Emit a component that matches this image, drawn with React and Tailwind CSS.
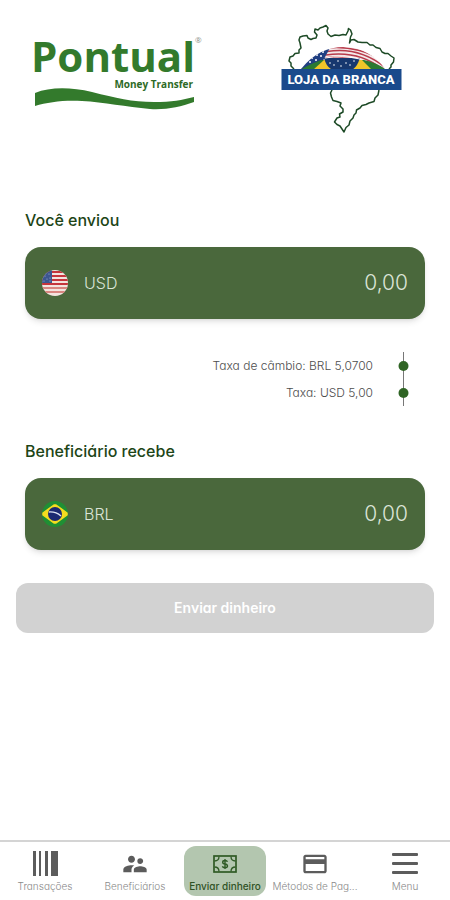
import { useState } from 'react';

import clsx from 'clsx';
import { MdCreditCard, MdSupervisorAccount } from 'react-icons/md';

function PontualLogo() {
  return (
    <svg width="174" height="90" viewBox="10 4 174 90" role="img" aria-label="Pontual Money Transfer">
      <text x="11" y="52" fontSize="42" className="font-['Open_Sans',sans-serif] font-bold" fill="#337a2c">
        Pontual
      </text>
      <text x="175" y="23" fontSize="8" className="font-['Open_Sans',sans-serif]" fill="#8a8f8a">
        ®
      </text>
      <text x="173" y="68" fontSize="10" textAnchor="end" className="font-['Open_Sans',sans-serif] font-bold" fill="#2d6a26">
        Money Transfer
      </text>
      <path
        d="M15 73 C30 67 50 67 72 72 C96 78 112 82 134 82 C152 82 162 80 174 77 V82 C160 87 146 90 130 89 C106 87 84 82 62 81 C44 80 28 82 15 86 Z"
        fill="#337a2c"
      />
    </svg>
  );
}

function LojaLogo() {
  return (
    <svg width="122" height="110" viewBox="10 9 122 110" role="img" aria-label="Loja da Branca">
      <defs>
        <clipPath id="dome">
          <path d="M31 54 C44 38 58 32 74 32 C91 32 106 41 115 54 Z" />
        </clipPath>
      </defs>
      <g fill="none" stroke="#1d4a26" strokeWidth="1.5" strokeLinejoin="round">
        <path d="M24 54 L21 51 L21 48 L19 46 L20 42 L23 41 L25 38.500 L29 38 L29 35 L31 33 L30 28 L29 25 L30 22 L33 21 L37 20.500 L38 23 L41 24.500 L43 23.500 L46 23 L47 20 L44.500 17 L45 14 L48 15 L50 13 L53 12 L56 10.500 L58 13 L57 16 L58 19 L61 21.500 L65 20 L69 20.500 L73 19.500 L76 20 L78 16 L78.500 13.500 L80.500 15 L82 19 L80.500 22 L79.500 28 L81 25 L84 24.500 L88 27 L92 27.500 L97 27.500 L100 30 L103 30 L106 32.500 L110 33.500 L112 37 L115 38.500 L118 38.500 L121 41 L124 43 L123.500 47 L121 50 L121 52 L119 54" />
        <path d="M62 75 L60.500 78 L61.500 82 L63 85.500 L67 86.500 L71 88 L70 91 L73 94 L73 97 L69.500 99 L70 102 L67 103 L64.500 107 L67 109.500 L70 111 L74 117 L76 112.500 L79 110 L80 106 L83 103 L84 100 L86 98 L86.500 95 L90 93 L92 90.500 L96 89.500 L99 88 L104 86.500 L105 83 L108 80 L109 75" />
      </g>
      <g clipPath="url(#dome)">
        <rect x="28" y="30" width="90" height="26" fill="#f4e9ea" />
        <g fill="none" stroke="#b83b4b" strokeWidth="1.5">
          <path d="M58 33 C78 31 100 36 116 48" />
          <path d="M57 36.500 C78 33 99 39 116 53" />
          <path d="M56 40 C77 37 97 42 112 54" />
          <path d="M55 43 C76 40 94 45 107 55" />
        </g>
        <path d="M28 56 L44 34 L61 31 L54 44 L44 56 Z" fill="#203f82" />
        <g fill="#fff">
          <circle cx="53" cy="37" r="1" />
          <circle cx="47" cy="40" r="1" />
          <circle cx="51" cy="41" r="1" />
          <circle cx="42" cy="43" r="1" />
          <circle cx="46" cy="45" r="1" />
          <circle cx="40" cy="47" r="1" />
        </g>
        <path d="M28 56 Q40 49 51 45 H94 Q108 48 118 56 Z" fill="#2c7a32" />
        <path d="M43 55 L54 45 H92 L102 55 Z" fill="#f0c52a" />
        <path d="M54 43 H90 Q86 55 80 55 H64 Q57 54 54 43 Z" fill="#17386f" />
        <path d="M55 43 Q72 40 90 44" fill="none" stroke="#fff" strokeWidth="1" />
        <g fill="#fff">
          <circle cx="60" cy="48" r="0.8" />
          <circle cx="64" cy="50" r="0.8" />
          <circle cx="68" cy="46" r="0.8" />
          <circle cx="71" cy="51" r="0.8" />
          <circle cx="76" cy="48" r="0.8" />
          <circle cx="80" cy="50" r="0.8" />
          <circle cx="84" cy="46" r="0.8" />
        </g>
      </g>
      <rect x="11.500" y="54" width="120" height="21" fill="#1a4a8c" />
      <text x="71" y="69" fontSize="13" textAnchor="middle" className="font-['Roboto',sans-serif] font-extrabold" fill="#fff">
        LOJA DA BRANCA
      </text>
    </svg>
  );
}

function UsFlag() {
  return (
    <svg width="26" height="26" viewBox="0 0 26 26" aria-hidden="true">
      <clipPath id="us">
        <circle cx="13" cy="13" r="13" />
      </clipPath>
      <g clipPath="url(#us)">
        <rect width="26" height="26" fill="#f3e3df" />
        <g fill="#c5343c">
          <rect y="1" width="26" height="2" />
          <rect y="5" width="26" height="2" />
          <rect y="9" width="26" height="2" />
          <rect y="13" width="26" height="2" />
          <rect y="17" width="26" height="2" fill="#d98580" />
          <rect y="21" width="26" height="2" fill="#d98580" />
        </g>
        <rect width="10" height="13" fill="#3c568f" />
        <g fill="#a9b7d4">
          <circle cx="3" cy="6" r="0.6" />
          <circle cx="7" cy="4" r="0.6" />
          <circle cx="5" cy="9" r="0.6" />
          <circle cx="8" cy="8" r="0.6" />
          <circle cx="2" cy="11" r="0.6" />
          <circle cx="8" cy="11" r="0.6" />
        </g>
      </g>
    </svg>
  );
}

function BrazilFlag() {
  return (
    <svg width="26" height="26" viewBox="0 0 26 26" aria-hidden="true">
      <circle cx="13" cy="13" r="13" fill="#1f8f34" />
      <path d="M1 12 L12 4 H14 L25 12 V14 L14 22 H12 L1 14 Z" fill="#f5dc1f" stroke="#f5dc1f" strokeWidth="1.500" strokeLinejoin="round" />
      <circle cx="13" cy="13" r="7" fill="#1c2a72" />
      <path d="M7 11 Q14 10.500 19 15" fill="none" stroke="#dfe5f3" strokeWidth="1.300" />
    </svg>
  );
}

function BarsIcon() {
  return (
    <svg width="26" height="26" viewBox="0 0 26 26" fill="#5c5c5c" aria-hidden="true">
      <rect x="1" y="0" width="3" height="25" />
      <rect x="7" y="0" width="2" height="25" />
      <rect x="13" y="0" width="3" height="25" />
      <rect x="19" y="0" width="7" height="25" />
    </svg>
  );
}

function BanknoteIcon() {
  return (
    <svg width="24" height="19" viewBox="0 0 24 19" fill="none" stroke="#2f5a25" aria-hidden="true">
      <rect x="1" y="1" width="22" height="16" strokeWidth="1.700" />
      <path d="M1.500 6 Q6 6 6 1.500 M18 1.500 Q18 6 22.500 6 M1.500 12 Q6 12 6 16.500 M18 16.500 Q18 12 22.500 12" strokeWidth="1.300" />
      <path d="M14.500 6.800 Q14 5.500 12 5.500 Q9.700 5.500 9.700 7.200 Q9.700 8.700 12 9 Q14.500 9.400 14.500 11 Q14.500 12.700 12 12.700 Q9.800 12.700 9.400 11.300 M12 4 V14" strokeWidth="1.400" />
    </svg>
  );
}

function MenuIcon() {
  return (
    <svg width="26" height="24" viewBox="0 0 26 24" fill="#5c5c5c" aria-hidden="true">
      <rect y="1" width="26" height="3" rx="1" />
      <rect y="10" width="26" height="3" rx="1" />
      <rect y="19" width="26" height="3" rx="1" />
    </svg>
  );
}

function AmountField({ id, label, currency, flag }) {
  const [value, setValue] = useState('0,00');

  return (
    <section className="flex flex-col gap-[15px] px-[9px]">
      <label htmlFor={id} className="text-base leading-6 font-medium text-[#1d4517]">
        {label}
      </label>
      <div className="flex h-[72px] items-center rounded-2xl bg-[#4a683c] px-[17px] shadow-md">
        {flag}
        <span className="ml-4 text-base font-light text-[#dbe4d7]">{currency}</span>
        <input
          id={id}
          value={value}
          onChange={(e) => setValue(e.target.value)}
          inputMode="decimal"
          className="min-w-0 flex-1 bg-transparent text-right text-[21px] font-light text-[#dbe4d7] outline-none"
        />
      </div>
    </section>
  );
}

const rates = ['Taxa de câmbio: BRL 5,0700', 'Taxa: USD 5,00'];

function Rates() {
  return (
    <div className="flex justify-end gap-[25px] pr-[25px]">
      <ul className="text-right text-xs leading-[27px] font-light text-[#4d4d4d]">
        {rates.map((rate) => (
          <li key={rate}>{rate}</li>
        ))}
      </ul>
      <svg width="11" height="54" viewBox="0 0 11 54" aria-hidden="true">
        <path d="M5.500 0 V54" stroke="#777" strokeWidth="1" />
        <circle cx="5.500" cy="14" r="5" fill="#2f6424" />
        <circle cx="5.500" cy="41" r="5" fill="#2f6424" />
      </svg>
    </div>
  );
}

const tabs = [
  { label: 'Transações', icon: <BarsIcon /> },
  { label: 'Beneficiários', icon: <MdSupervisorAccount size={28} /> },
  { label: 'Enviar dinheiro', icon: <BanknoteIcon />, active: true },
  { label: 'Métodos de Pag...', icon: <MdCreditCard size={28} /> },
  { label: 'Menu', icon: <MenuIcon /> },
];

function TabBar() {
  return (
    <nav className="grid grid-cols-5 border-t-2 border-[#d4d4d4] py-1">
      {tabs.map(({ label, icon, active }) => (
        <button
          key={label}
          type="button"
          aria-current={active ? 'page' : undefined}
          className={clsx(
            'mx-1 flex flex-col items-center rounded-xl pt-1 pb-0.5 text-[10px] leading-4 whitespace-nowrap',
            active ? 'bg-[#b3c6af] font-medium text-[#2f5226]' : 'font-light text-[#8a8a8a]'
          )}
        >
          <span className="flex h-7 items-center text-[#5c5c5c]">{icon}</span>
          {label}
        </button>
      ))}
    </nav>
  );
}

export default function App() {
  return (
    <div className="flex min-h-screen flex-col bg-white font-['Inter',sans-serif] [font-feature-settings:'cv11']">
      <header className="flex h-[134px] items-start justify-between pt-6 pr-12 pl-[30px]">
        <PontualLogo />
        <LojaLogo />
      </header>

      <main className="flex flex-1 flex-col gap-[33px] px-4 pt-[74px]">
        <AmountField id="sent" label="Você enviou" currency="USD" flag={<UsFlag />} />
        <Rates />
        <AmountField id="received" label="Beneficiário recebe" currency="BRL" flag={<BrazilFlag />} />
        <button type="button" className="h-[50px] rounded-xl bg-[#d2d2d2] text-sm font-semibold text-white">
          Enviar dinheiro
        </button>
      </main>

      <TabBar />
    </div>
  );
}
